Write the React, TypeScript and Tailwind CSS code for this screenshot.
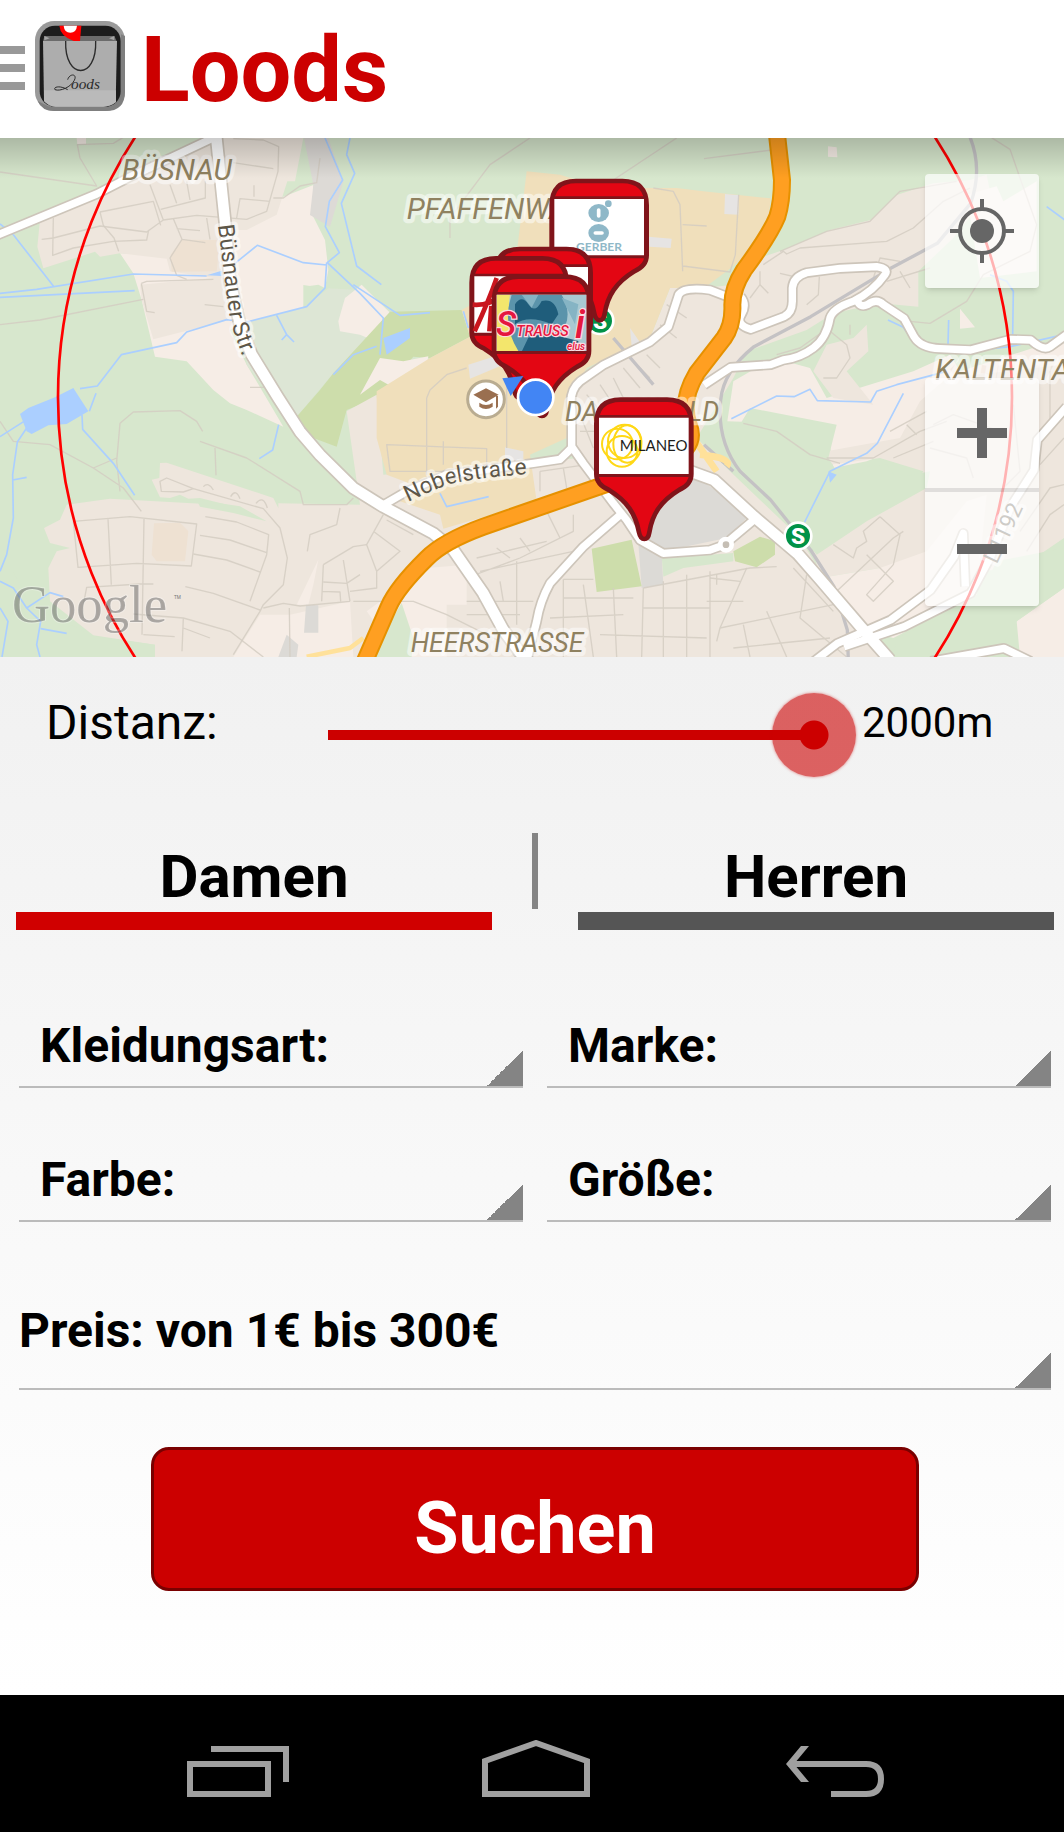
import { useState, type ReactNode } from 'react';

// Map drawing works on a 3192 x 1557 canvas, three units per css pixel.

const AREAS = [
  { fill: '#f6ede6', d: 'M360 346L500 350 690 276 850 176 940 141 940 236 975 306 985 396 975 451 910 441 910 511 740 551 690 576 740 680 850 866 740 816 690 796 640 756 560 670 465 656 425 486 400 406Z' },
  { fill: '#eee6dd', d: 'M120 246L300 166 640 0 910 0 885 130 862 130 830 230 740 276 690 276 700 420 690 545 460 604 425 486 420 440 640 420 510 400 500 362 360 346 300 356 285 341 130 391 112 326Z' },
  { fill: '#eee1d2', d: 'M545 305L660 306 650 400 515 401 512 350Z' },
  { fill: '#dddad6', d: 'M912 0L985 0 1030 131 990 266 930 231 940 141Z' },
  { fill: '#dde6d5', d: 'M740 680L740 551 910 511 985 451 1080 456 1180 530 1000 706 890 836 850 826Z' },
  { fill: '#d7e7cd', d: 'M912 446L955 440 975 450 912 508Z' },
  { fill: '#f6ede6', d: 'M1035 480L1085 440 1170 524 1150 620 1080 590 1020 580 1015 550Z' },
  { fill: '#f6ede6', d: 'M230 0L258 0 258 18 232 18Z' },
  { fill: '#cdddab', d: 'M1000 706L1170 521 1385 516 1410 596 1290 660 1240 656 1130 780 1040 816 1010 926 930 896 890 836 960 756Z' },
  { fill: '#eee6dd', d: 'M200 1100L330 1082 835 1110 835 1096 1080 1100 1060 960 1040 820 1130 770 1150 1010 1740 960 1700 780 1800 690 1950 600 2010 450 2112 450 2200 440 2290 356 2350 336 2490 276 2612 246 2690 171 2800 136 2910 126 2960 110 2970 160 2860 300 2755 400 2755 506 2640 496 2500 526 2420 576 2240 640 2200 720 2090 900 2190 1000 2400 1200 2560 1466 2640 1557 465 1557 465 1520 280 1492 150 1390 145 1290 170 1240 210 1230 150 1215 132 1170 180 1145Z' },
  { fill: '#eee6dd', d: 'M455 1025L478 1020 480 975 500 974 820 1080 835 1110 810 1150 760 1120 600 1080 565 1082 540 1070 510 1080 480 1078Z' },
  { fill: '#eee1d2', d: 'M462 1156L540 1154 565 1180 555 1270 470 1270 455 1250Z' },
  { fill: '#d7e7cd', d: 'M590 1085L720 1105 800 1150 700 1125 600 1106Z' },
  { fill: '#f6ede6', d: 'M1080 770L1140 660 1210 670 1285 655 1270 740 1200 760 1140 726Z' },
  { fill: '#f0dfbb', d: 'M1580 100L1680 110 1810 150 2030 150 2110 160 2312 181 2300 300 2180 400 2112 450 2010 450 1950 600 1760 690 1715 776 1700 900 1590 950 1610 1090 1330 1172 1320 1130 1200 1090 1240 1040 1160 1010 1130 900 1130 760 1290 660 1410 596 1385 516 1540 430Z' },
  { fill: '#e6e4e3', d: 'M1945 296L2015 302 2012 330 1948 326ZM2175 168L2217 172 2215 230 2173 228ZM1405 680L1480 656 1510 680 1410 722ZM1515 928L1570 940 1570 966 1515 970ZM1890 570L1925 620 1895 626Z' },
  { fill: '#f6ede6', d: 'M1100 1420L1280 1290 1400 1280 1400 1400 1340 1400 1340 1557 1200 1557ZM870 1430L1050 1390 1060 1557 700 1557 780 1430ZM890 1400L955 1265 940 1340 925 1400Z' },
  { fill: '#d7e7cd', d: 'M1205 1395L1240 1500 1235 1557 1110 1557ZM0 1240L40 1300 90 1400 280 1495 465 1520 465 1557 0 1557Z' },
  { fill: '#dcdad6', d: 'M918 1400L955 1402 955 1484 912 1484ZM835 1557L860 1490 895 1520 890 1557ZM1910 1180L1980 1060 2080 1010 2250 1130 2180 1200 1990 1240ZM1915 1215L1985 1250 1990 1340 1925 1350Z' },
  { fill: '#cdddab', d: 'M1775 1232L1895 1205 1925 1345 1790 1362ZM2200 1240L2280 1196 2325 1210 2325 1250 2270 1288 2205 1270Z' },
  { fill: '#d7e7cd', d: 'M1985 1255L2130 1250 2200 1245 2200 1270 2050 1290 1990 1316Z' },
  { fill: '#f6ede6', d: 'M2182 850L2200 730 2320 660 2430 690 2480 780 2740 700 2850 650 2880 700 3192 600 3192 760 3060 860 2780 900 2600 970 2500 990 2480 860Z' },
  { fill: '#eee6dd', d: 'M2480 940L2700 900 2760 790 2840 720 3192 680 3192 1200 3060 1290 2780 1310 2640 1290 2460 1320 2440 1240 2730 1060 2770 1000 2640 960 2490 980Z' },
  { fill: '#d7e7cd', d: 'M2195 900L2250 810 2510 860 2485 960 2510 1000 2660 978 2690 1020 2790 1000 2780 1050 2600 1150 2450 1250 2400 1190 2200 970Z' },
  { fill: '#f6ede6', d: 'M2460 1320L2640 1290 2780 1240 2900 1090 2960 1070 2930 1370 2680 1500 2560 1466ZM3050 1450L3192 1350 3192 1557 3060 1557Z' },
  { fill: '#d7e7cd', d: 'M2690 1500L2930 1390 2990 1270 3192 1230 3192 1350 3050 1450 3000 1530 2760 1557 2680 1557Z' },
  { fill: '#eee6dd', d: 'M2560 600L2600 560 2605 640 2540 700 2620 800 2500 780 2440 700 2480 620Z' },
  { fill: '#f6ede6', d: 'M2484 25L2510 28 2512 58 2484 56ZM2880 512L2925 568 2880 572ZM2900 170L2990 145 3010 190 3110 130 3110 400 2940 420Z' },
  { fill: '#abcfff', d: 'M60 828L85 810 165 778 220 750 265 820 200 858 145 862 95 888 80 880ZM1150 600L1230 570 1230 600 1160 650ZM620 412L665 398 665 414ZM2485 1000L2510 1010 2490 1034Z' },
];

const STREETS = [
  'M0 102L290 144 240 60 232 20 340 16 400 -20',
  'M160 240L158 352 220 330 340 310 440 306 446 276M125 304L160 300 300 264 440 282 490 246 450 140M300 222L460 190 482 262M482 214L616 180 616 130M510 140L530 196M560 130L570 186M490 246L590 232 740 244 800 220 834 100 836 26 790 6 700 2M700 74L820 92M710 240L720 182 810 190M762 142L762 176',
  'M300 222L310 262 342 300 356 340M520 242L546 304 510 360 530 412 560 424M620 240L630 304M546 304L616 314M530 272L600 278',
  'M820 180L850 180 900 144 950 134 960 60M424 436L440 430 640 424M424 436L440 520 464 524M614 500L670 506M0 560L120 546 430 484M750 748L792 748',
  'M1350 300L1350 240 1470 80 1590 0M2030 0L1840 126M1960 150L2020 160 2040 200 2048 400M2048 260L2120 264M2048 384L2190 402 2206 350 2216 170',
  'M1280 780L1290 756 1340 710 1400 690M1280 780L1280 1010M1160 920L1460 932 1460 1000 1170 1000ZM1330 910L1330 980M1520 930L1520 720',
  'M1840 720L1880 800M1800 740L1840 800M1870 690L1920 750M1900 670L1950 720M1940 650L1980 690M1760 770L1810 830M2000 500L2060 540M1980 560L2030 600M1740 880L1800 880M1740 830L1780 930M1620 1000L1760 980M1620 1000L1620 1060M1690 990L1700 1050',
  'M360 1060L350 970 360 856 400 822 540 818 590 850 608 880M600 910L740 960 900 1060 910 1100 1040 1100 1060 1080M645 930L648 1012M280 990L350 960M0 850L40 910 150 920 280 990 370 1050 424 1120',
  'M220 1150L390 1136 590 1158 574 1284 410 1276 234 1288ZM324 1142L334 1340M432 1142L426 1490M250 1400L260 1348 420 1338 460 1338M250 1400L250 1440M480 1030L500 1020 580 1052 550 1062 484 1060ZM580 1052L790 1112 840 1170 862 1260 850 1340 790 1400 780 1420 700 1550M610 1046Q625 1030 640 1056M692 1076Q707 1050 720 1082M768 1096Q790 1070 802 1110',
  'M616 1136L710 1152 806 1190 800 1250 750 1390M600 1192L690 1206 800 1244M580 1248L680 1266 780 1302M556 1346L640 1366 780 1416M400 1428L550 1440 690 1480 790 1557M550 1440L546 1540M430 1490L524 1496M550 1470L630 1500M790 1410L850 1396 900 1404 1050 1390M868 1410L870 1557M970 1280L1060 1226 1100 1220M970 1280L965 1390M970 1332L1040 1336 1080 1310M1030 1266L1050 1390M965 1360L1020 1362 1022 1390M1020 1110L1010 1160 930 1190 922 1240',
  'M1150 1130L1100 1220 1130 1300 1130 1350 1050 1360M1120 1180L1200 1240 1130 1300M1160 1146L1240 1190M1060 1390L1240 1390 1340 1430 1500 1510M1400 1320L1560 1260 1720 1180 1720 1130M1430 1260L1640 1210M1440 1300L1720 1240M1490 1230L1530 1260M1560 1200L1590 1240M1640 1120L1680 1200M1550 1270L1550 1460M1500 1330L1510 1390M1400 1390L1600 1390M1400 1430L1560 1430',
  'M1690 1324L1690 1557M1690 1324L1780 1324M1690 1380L1900 1380M1650 1440L1870 1430M1750 1340L1780 1557M1840 1350L1850 1557M1930 1350L1925 1557M1990 1330L1990 1557M2060 1310L2060 1557M2130 1300L2130 1557M1930 1410L2130 1410M1800 1490L2120 1500M1930 1350L2250 1290 2330 1286',
  'M2130 1320L2220 1330M2120 1390L2230 1390M2150 1310L2150 1340M2240 1290L2160 1470 2150 1510M2160 1470L2500 1400M2200 1530L2490 1500M2230 1460L2250 1557M2300 1420L2360 1557M2420 1310L2400 1440 2540 1557M2380 1290L2500 1420',
  'M2500 1220L2560 1260 2570 1230 2600 1210 2590 1180 2640 1136M2510 1360L2680 1200 2710 1180M2640 1136L2700 1190 2680 1280 2600 1370 2620 1390 2680 1330 2600 1250M2480 960L2620 960 2760 880 2840 850M2670 880L2780 820M2720 860L2750 890M2680 960L2800 910',
  'M2290 380L2350 340 2360 348 2400 330 2660 310 2740 270 2830 190 2910 150M2340 340L2480 280 2610 250 2700 160 2870 130M2280 400L2280 440 2305 466M2250 480L2280 440M2340 406L2400 420M2458 416L2455 470 2420 500M2600 480L2640 360 2700 370M2660 430L2790 390M2700 400L2730 450M2470 580L2400 630 2330 650M2490 580L2540 620 2550 660 2510 720 2470 720M2550 560L2550 590',
  'M2112 62L2330 34M2970 -4L3030 34 3060 120 3110 260 3090 340 2950 410M2730 550L2790 556 2900 490 2950 410M2230 856L2330 880 2430 950 2520 976',
  'M3060 1180L3150 1050 3192 1040M3080 1240L3150 1130 3192 1100M3040 800L3060 1000 3000 1060M2800 860L2860 830 3000 880M2790 930L2900 960 2920 1020M3150 700L3150 860M3192 900L3120 980',
];

const WATER = [
  'M0 466L110 454 400 408 620 414M0 478L404 458M40 290L160 444M0 258L40 290M700 380L772 322 910 374 980 381M980 374L975 450 920 506 740 552 680 545 560 582 530 614 364 650 292 744 240 752M830 532L860 590 882 612M860 590L845 606',
  'M975 0L1028 126 988 190 976 266 1018 344 982 374 1080 466 1150 540 1140 650M1050 0L1040 50 1064 106 1024 196 1070 384 1144 440M1000 710L1060 650 1130 625M1060 440L1200 532 1290 524M1390 520L1405 570',
  'M0 896L72 850M80 870L52 912 38 1010 40 1140 20 1250 0 1300M38 1026L80 1018M246 830L248 874 340 976 404 1072M288 766L268 820M836 860L818 936 778 962M0 1330L40 1350 80 1410 150 1364 190 1376M80 1410L122 1450 110 1520 120 1557M122 1472L200 1486M0 1410L24 1450 6 1557',
  'M1320 1066L1340 1106 1466 1076M2194 842L2330 774 2382 776 2430 754 2452 788 2612 792 2630 760 2690 740 2840 700M2710 766L2632 916 2600 946 2490 1000 2414 1152M2664 546L2710 568 2740 610 2780 634M2846 546L2844 620M3140 206L3200 250M2970 410L3020 430 3040 460 3038 590M2900 640L3030 626 3192 590',
];

const WHITE_ROADS = [
  'M-20 296L290 168 400 112 520 56 660 -10',
  'M1150 1101L1220 1060 1340 1010 1600 976 1680 964 1715 930',
  'M2182 476L2130 456Q2050 446 2036 470L2005 566 1950 612 1810 681 1740 730Q1705 760 1715 816V926L1750 976 1840 1096 1880 1146 1920 1206 1990 1246 2130 1236 2172 1221 2267 1141',
  'M1860 1131L1750 1226 1650 1336Q1620 1390 1610 1450L1580 1570',
  'M2222 476Q2242 500 2224 530T2252 574L2352 536Q2377 525 2377 490V450Q2380 416 2420 404L2520 391 2630 386Q2668 392 2655 410 2620 460 2560 490 2500 510 2490 540 2480 600 2440 630 2400 660 2350 666L2312 680 2192 688 2112 741',
  'M2572 488Q2580 510 2602 500 2630 480 2650 500L2712 541 2742 596Q2762 630 2820 632L2912 636 3032 604 3092 606Q3130 640 3150 626L3200 590',
  'M2442 1570L2512 1516 2672 1446 2792 1356 2862 1256 2890 1186 2896 1346',
  'M2532 1526L2712 1466 2912 1366 2972 1256 3032 1106 3102 996 3112 906 3200 806',
  'M2792 1570L3012 1531 3092 1570',
];

const MAIN_ROADS = [
  'M648 -10L675 250 690 430 720 560 755 650 835 780 900 881 960 951 1060 1050 1150 1106 1300 1186 1360 1236 1450 1366 1510 1476 1580 1570',
  'M2070 1000L2142 1026 2262 1136 2392 1246 2462 1326 2582 1466 2670 1566',
];

const HIGHWAY =
  'M2331 -10L2346 126Q2346 190 2332 236 2310 290 2232 396 2197 450 2197 500 2200 560 2172 600L2090 706Q2040 790 2066 860 2100 940 1960 990L1785 1050 1450 1166Q1330 1210 1280 1261 1190 1350 1166 1406L1090 1580';

const RAIL =
  'M2907 -10Q2950 90 2912 196L2812 316 2672 391 2432 536 2262 626Q2170 700 2162 786 2150 910 2220 1000L2312 1086 2432 1236 2502 1346 2542 1476 2545 1570M1840 600L1960 740M2112 920L2200 1000';

const PIN =
  'M7 80Q7 7 80 7H219Q292 7 292 80V230Q292 262 255 278C200 312 175 350 166 405Q163 425 151 425T135 405C125 350 100 312 45 278Q7 262 7 230Z';

const Pin = ({ x, y, children }: { x: number; y: number; children?: ReactNode }) => (
  <g transform={`translate(${x} ${y})`}>
    <path d={PIN} fill="#e30613" stroke="#80141a" strokeWidth="14" />
    <path d="M10 53H289V239H10Z" fill="#80141a" />
    <path d="M15 61H284V230H15Z" fill="#fff" />
    {children}
  </g>
);

const Station = ({ x, y }: { x: number; y: number }) => (
  <g transform={`translate(${x} ${y})`}>
    <circle r="44" fill="#fff" />
    <circle r="36" fill="#009247" />
    <text y="24" textAnchor="middle" fontSize="68" fontWeight="900" fill="#fff">S</text>
  </g>
);

const CityMap = () => (
  <svg
    viewBox="0 0 3192 1557"
    preserveAspectRatio="xMidYMid slice"
    className="block h-full w-full font-['Roboto',sans-serif]"
    role="img"
    aria-label="Karte"
  >
    <defs>
      <path id="buesnauer" d="M654 262L690 550 740 690" />
      <path id="nobel" d="M1224 1092Q1290 1060 1350 1038 1440 1018 1590 1008" />
      <clipPath id="strauss">
        <path d="M15 61H284V230H15Z" />
      </clipPath>
    </defs>
    <rect width="3192" height="1557" fill="#d7e7cd" />
    {AREAS.map((area) => (
      <path key={area.d} d={area.d} fill={area.fill} />
    ))}
    <g fill="none" strokeLinejoin="round">
      {STREETS.map((d) => (
        <path key={d} d={d} stroke="#d3cdc2" strokeOpacity="0.85" strokeWidth="4" />
      ))}
      {WATER.map((d) => (
        <path key={d} d={d} stroke="#abcfff" strokeWidth="5" />
      ))}
      <path d={RAIL} stroke="#c4c2c4" strokeWidth="10" />
      <path d="M2180 985Q2200 960 2100 950M2060 1000L2140 1020M2080 900L2150 1000" stroke="#ffe19a" strokeWidth="20" />
      <path d="M920 1556L1050 1530 1090 1500" stroke="#ffe19a" strokeWidth="14" />
      {WHITE_ROADS.map((d) => (
        <path key={d} d={d} stroke="#cdc5ba" strokeWidth="32" />
      ))}
      {MAIN_ROADS.map((d) => (
        <path key={d} d={d} stroke="#cdc5ba" strokeWidth="42" />
      ))}
      {WHITE_ROADS.map((d) => (
        <path key={d} d={d} stroke="#fff" strokeWidth="22" />
      ))}
      {MAIN_ROADS.map((d) => (
        <path key={d} d={d} stroke="#fff" strokeWidth="32" />
      ))}
      <path d={HIGHWAY} stroke="#e69100" strokeWidth="54" />
      <path d={HIGHWAY} stroke="#ff9f21" strokeWidth="42" />
    </g>
    <circle cx="2178" cy="1220" r="17" fill="#c5beb4" stroke="#fff" strokeWidth="14" />
    <circle cx="1605" cy="778" r="1431" fill="none" stroke="#f00" strokeWidth="8" />

    <g fill="#8f8160" stroke="#fff" strokeOpacity="0.5" strokeWidth="26" strokeLinejoin="round" paintOrder="stroke" fontStyle="italic">
      <text x="365" y="126" fontSize="88">BÜSNAU</text>
      <text x="1220" y="244" fontSize="88">PFAFFENWALD</text>
      <text x="2805" y="726" fontSize="88">KALTENTAL</text>
      <text x="1695" y="850" fontSize="80">DACHSWALD</text>
      <text x="1232" y="1542" fontSize="80">HEERSTRASSE</text>
    </g>
    <g fill="#5d5648" stroke="#fff" strokeOpacity="0.5" strokeWidth="22" strokeLinejoin="round" paintOrder="stroke" fontSize="68">
      <text><textPath href="#buesnauer">Büsnauer Str.</textPath></text>
      <text><textPath href="#nobel">Nobelstraße</textPath></text>
      <text transform="translate(2990 1280) rotate(-65)">L1192</text>
    </g>

    <Station x={2394} y={1194} />
    <Station x={1800} y={548} />
    <g transform="translate(1458 784)">
      <circle r="55" fill="#fff" stroke="#b9ac91" strokeWidth="9" />
      <path d="M-38 -14L0 -33 38 -14 0 9ZM-20 10Q0 24 20 10V22Q0 36 -20 22ZM30 -10H36V22L30 28Z" fill="#9a6f50" />
    </g>

    <Pin x={1648} y={122}>
      <g fill="#8fb8c8">
        <ellipse cx="148" cy="103" rx="31" ry="27" />
        <circle cx="177" cy="75" r="10" />
        <ellipse cx="148" cy="163" rx="31" ry="27" />
        <text x="149" y="217" textAnchor="middle" fontSize="36" fontWeight="700" className="font-['Lato',sans-serif]">GERBER</text>
      </g>
      <path d="M148 94V112M138 163H158" stroke="#fff" strokeWidth="11" strokeLinecap="round" />
    </Pin>
    <Pin x={1480} y={326} />
    <Pin x={1408} y={354}>
      <path d="M82 66Q60 130 16 226M10 146Q60 150 92 120M66 150L60 226" fill="none" stroke="#c9151e" strokeWidth="14" />
    </Pin>
    <Pin x={1475} y={409}>
      <g clipPath="url(#strauss)">
        <path d="M15 61H284V230H15Z" fill="#a9c9d2" />
        <path d="M15 61H55Q40 140 90 230H15Z" fill="#f3e66c" />
        <path d="M60 61H210Q250 130 200 190L230 230H80Q30 150 60 61Z" fill="#5b94ab" />
        <path d="M70 90Q90 60 110 90T150 80Q190 70 200 120L180 150Q110 120 70 150ZM110 190Q160 170 260 200V232H90Z" fill="#1f5d7b" />
        <path d="M90 61L120 100 140 61ZM210 70L260 90 250 150ZM100 150L140 170 120 190Z" fill="#86b4c4" />
        <g fill="#e5173f" stroke="#fbdbe2" strokeWidth="7" paintOrder="stroke" fontStyle="italic" fontWeight="500">
          <text x="12" y="186" fontSize="104">S</text>
          <text x="74" y="186" fontSize="43">TRAUSS</text>
          <text x="250" y="190" fontSize="120">i</text>
          <text x="226" y="226" fontSize="30">elus</text>
        </g>
      </g>
    </Pin>
    <path d="M1507 721L1570 714 1532 774Z" fill="#4285f4" />
    <circle cx="1607" cy="778" r="53" fill="#4285f4" stroke="#fff" strokeWidth="8" />
    <Pin x={1782} y={778}>
      <g fill="none" stroke="#ffd816" strokeWidth="6">
        <circle cx="70" cy="140" r="46" />
        <circle cx="92" cy="132" r="50" />
        <circle cx="84" cy="162" r="46" />
        <ellipse cx="100" cy="140" rx="42" ry="56" />
      </g>
      <text x="77" y="162" fontSize="45" fill="#1d1d1b" className="font-['Lato',sans-serif]">MILANEO</text>
    </Pin>

    <text x="36" y="1453" fontSize="158" fill="#555" fillOpacity="0.45" stroke="#fff" strokeOpacity="0.3" strokeWidth="6" paintOrder="stroke" className="font-['Liberation_Serif',serif]">
      Google
    </text>
    <text x="522" y="1384" fontSize="14" fill="#777">TM</text>
  </svg>
);

const AppIcon = () => (
  <svg viewBox="0 0 270 270" className="h-[90px] w-[90px]" aria-hidden="true">
    <rect width="270" height="270" rx="58" fill="#9a9a9a" />
    <path d="M270 45V212Q270 270 212 270H58Q20 270 8 240L40 256H200Q255 256 258 200V40Z" fill="#7f7f7f" />
    <rect x="14" y="14" width="243" height="243" rx="46" fill="#1c1c1c" />
    <path d="M28 45H238L246 62H24Z" fill="#6b6b6b" />
    <path d="M28 45L44 52 28 58ZM238 45L222 52 238 58Z" fill="#a5a5a5" />
    <path d="M24 60H246L242 244Q225 257 205 257H62Q42 257 27 240Z" fill="#adadad" />
    <path d="M27 208H243V243Q225 257 205 257H62Q42 257 27 240Z" fill="#bababa" />
    <path d="M73 14H139L135 60H116Q76 45 73 14Z" fill="#f00" />
    <path d="M86 14H126Q124 35 106 35T86 14Z" fill="#fff" />
    <path d="M92 60C88 178 186 178 182 60" fill="none" stroke="#2b2b2b" strokeWidth="4" />
    <path d="M98 176C104 156 128 158 118 178 108 198 76 212 60 206 54 198 74 192 98 206" fill="none" stroke="#2b2b2b" strokeWidth="3" />
    <text x="108" y="204" fontSize="46" fontStyle="italic" fill="#2b2b2b" className="font-['Liberation_Serif',serif]">oods</text>
  </svg>
);

const spinner =
  'w-full appearance-none rounded-none border-b-2 border-[#bbb] bg-[linear-gradient(135deg,transparent_50%,#848484_50%)] bg-[length:36px_36px] bg-right-bottom bg-no-repeat text-[48px] font-bold text-black outline-none';

const filters = ['Kleidungsart:', 'Marke:', 'Farbe:', 'Größe:'];

export default function App() {
  const [distance, setDistance] = useState(2000);
  const [gender, setGender] = useState('Damen');

  return (
    <div className="flex min-h-screen flex-col bg-white font-['Roboto',sans-serif] text-black">
      <header className="flex h-[138px] items-start">
        <button aria-label="Menü" className="mt-[46px] flex w-[35px] flex-col gap-2.5">
          <span className="h-2 w-[25px] bg-[#999]" />
          <span className="h-2 w-[25px] bg-[#999]" />
          <span className="h-2 w-[25px] bg-[#999]" />
        </button>
        <div className="mt-[21px]">
          <AppIcon />
        </div>
        <h1 className="ml-4 text-[90px] leading-[142px] font-bold text-[#c00]">Loods</h1>
      </header>

      <section className="relative aspect-[1064/519] w-full overflow-hidden">
        <CityMap />
        <div className="absolute inset-x-0 top-0 h-10 bg-linear-to-b from-black/20 to-transparent" />
        <div className="absolute top-9 right-[25px] flex flex-col gap-[90px]">
          <button aria-label="Mein Standort" className="flex h-[114px] w-[114px] items-center justify-center rounded bg-white/70 shadow-md">
            <svg viewBox="0 0 64 64" className="h-16 w-16" fill="none" stroke="#666" strokeWidth="4">
              <circle cx="32" cy="32" r="22" />
              <circle cx="32" cy="32" r="12" fill="#666" stroke="none" />
              <path d="M32 0V9M32 55V64M0 32H9M55 32H64" />
            </svg>
          </button>
          <div className="flex w-[114px] flex-col rounded bg-white/70 shadow-md">
            <button aria-label="Vergrößern" className="flex h-[114px] items-center justify-center border-b-4 border-black/10">
              <svg viewBox="0 0 50 50" className="h-[50px] w-[50px]" stroke="#666" strokeWidth="10">
                <path d="M25 0V50M0 25H50" />
              </svg>
            </button>
            <button aria-label="Verkleinern" className="flex h-[114px] items-center justify-center">
              <svg viewBox="0 0 50 50" className="h-[50px] w-[50px]" stroke="#666" strokeWidth="10">
                <path d="M0 25H50" />
              </svg>
            </button>
          </div>
        </div>
      </section>

      <main className="flex-1 bg-linear-to-b from-[#f1f1f1] to-white">
        <div className="flex items-start pt-9">
          <label htmlFor="distance" className="w-[328px] pl-[46px] text-[48px] leading-[60px]">
            Distanz:
          </label>
          <input
            id="distance"
            type="range"
            min="0"
            max="2000"
            step="50"
            value={distance}
            onChange={(e) => setDistance(Number(e.target.value))}
            style={{ backgroundSize: `calc((100% - 84px) * ${distance / 2000} + 42px) 10px` }}
            className="h-[84px] min-w-0 flex-1 appearance-none bg-[linear-gradient(#c00,#c00)] bg-left bg-no-repeat outline-none [&::-webkit-slider-thumb]:h-[84px] [&::-webkit-slider-thumb]:w-[84px] [&::-webkit-slider-thumb]:appearance-none [&::-webkit-slider-thumb]:rounded-full [&::-webkit-slider-thumb]:bg-[radial-gradient(circle,#c00_14px,#cc000099_15px)] [&::-webkit-slider-thumb]:shadow-[0_0_3px_#cc000080]"
          />
          <output htmlFor="distance" className="w-52 pl-1.5 text-[42px] leading-[60px]">
            {distance}m
          </output>
        </div>

        <div className="mt-14 flex pr-2.5 pl-4">
          <button
            aria-pressed={gender === 'Damen'}
            onClick={() => setGender('Damen')}
            className={`flex-1 border-b-[18px] pt-2 text-[60px] leading-[71px] font-bold ${gender === 'Damen' ? 'border-[#d00000]' : 'border-[#555]'}`}
          >
            Damen
          </button>
          <div className="mx-10 h-[76px] w-1.5 bg-[#848484]" />
          <button
            aria-pressed={gender === 'Herren'}
            onClick={() => setGender('Herren')}
            className={`flex-1 border-b-[18px] pt-2 text-[60px] leading-[71px] font-bold ${gender === 'Herren' ? 'border-[#d00000]' : 'border-[#555]'}`}
          >
            Herren
          </button>
        </div>

        <div className="mt-[74px] grid grid-cols-2 gap-x-6 gap-y-[50px] pr-[13px] pl-[19px]">
          {filters.map((name) => (
            <select key={name} aria-label={name} className={`${spinner} h-[84px] pt-0.5 pl-[21px]`}>
              <option>{name}</option>
            </select>
          ))}
          <select aria-label="Preis" className={`${spinner} col-span-2 h-[118px] pt-0.5`}>
            <option>Preis: von 1€ bis 300€</option>
          </select>
        </div>

        <div className="pt-[57px] pr-[145px] pb-[102px] pl-[151px]">
          <button className="h-[144px] w-full rounded-[18px] border-3 border-[#7a0000] bg-[#c00] pt-5 text-[72px] leading-[84px] font-bold text-white">
            Suchen
          </button>
        </div>
      </main>

      <nav className="flex h-[137px] items-center justify-center bg-black pt-2.5 pl-2">
        <button aria-label="Letzte Apps" className="flex w-[298px] justify-center">
          <svg viewBox="0 0 102 58" className="h-[58px] w-[102px]" fill="none" stroke="#a0a0a0" strokeWidth="6">
            <path d="M24 9H99V42M3 24H81V54H3Z" />
          </svg>
        </button>
        <button aria-label="Startseite" className="flex w-[298px] justify-center">
          <svg viewBox="0 0 108 58" className="h-[58px] w-[108px]" fill="none" stroke="#a0a0a0" strokeWidth="6">
            <path d="M3 21L54 3 105 21V54H3Z" />
          </svg>
        </button>
        <button aria-label="Zurück" className="flex w-[298px] justify-center">
          <svg viewBox="0 0 100 58" className="h-[58px] w-[100px]" fill="none" stroke="#a0a0a0" strokeWidth="6">
            <path d="M7 24H82Q97 24 97 39T82 54H47" />
            <path d="M2 24L17 6H25L10 24 25 42H17Z" fill="#a0a0a0" stroke="none" />
          </svg>
        </button>
      </nav>
    </div>
  );
}
